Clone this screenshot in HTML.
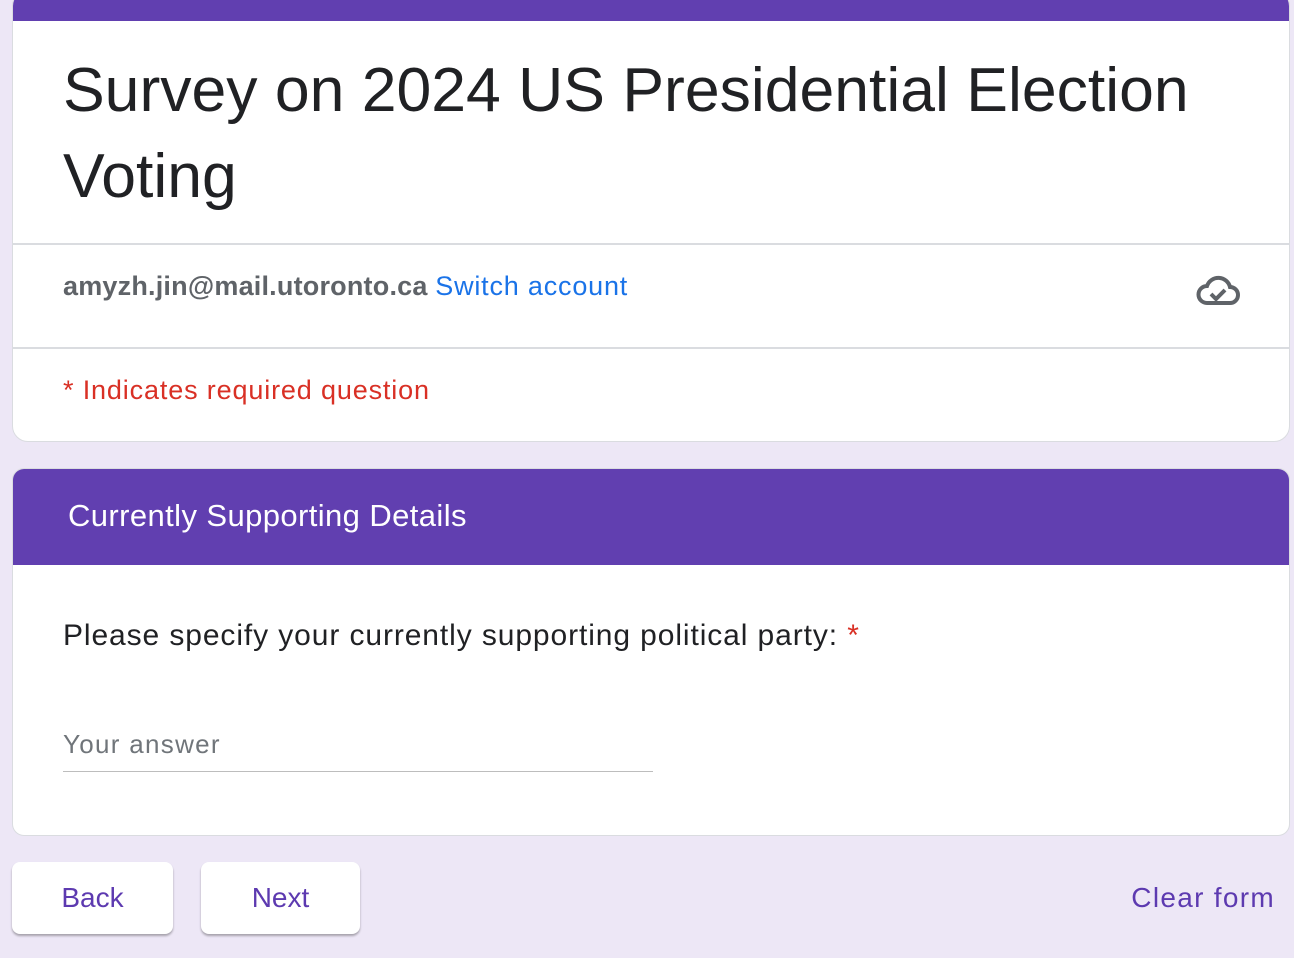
<!DOCTYPE html>
<html><head><style>
body{margin:0;width:1294px;height:958px;background:#ede7f6;font-family:"Liberation Sans",Arial,sans-serif;position:relative;overflow:hidden}
.card{position:absolute;left:12px;width:1278px;background:#fff;border:1px solid #dadce0;box-sizing:border-box}
.c1{top:-10px;height:452px;border-radius:16px;overflow:hidden}
.bar{position:absolute;left:0;top:0;width:100%;height:30px;background:#613fb0}
.t{position:absolute;left:50px;top:56px;font-size:62.5px;line-height:86px;color:#202124;width:1200px}
.hr{position:absolute;left:0;width:100%;border-top:2px solid #dadce0}
.c2{top:468px;height:368px;border-radius:12px;overflow:hidden}
.hd{position:absolute;left:0;top:0;width:100%;height:96px;background:#613fb0;color:#fff;font-size:31px;letter-spacing:0.4px}
.btn{position:absolute;top:862px;height:72px;background:#fff;border-radius:8px;box-shadow:0 2px 2px rgba(0,0,0,.3);color:#5d3ab0;font-size:28px;text-align:center;line-height:72px}
</style></head><body>
<div class="card c1">
<div class="bar"></div>
<div class="t">Survey on 2024 US Presidential Election Voting</div>
<div class="hr" style="top:252px"></div>
<div style="position:absolute;left:50px;top:280px;font-size:27px;color:#5f6368;font-weight:bold;letter-spacing:0.2px">amyzh.jin@mail.utoronto.ca <span style="color:#1a73e8;font-weight:normal;letter-spacing:0.8px">Switch account</span></div>
<svg style="position:absolute;left:1182px;top:280px" width="46" height="40" viewBox="0 0 46 40"><path d="M12 32 H35 A8 8 0 0 0 35 16 A12 12 0 0 0 12 15 A8.5 8.5 0 0 0 12 32 Z" fill="none" stroke="#5f6368" stroke-width="4"/><path d="M16 23 L21 28 L30 19" fill="none" stroke="#5f6368" stroke-width="4"/></svg>
<div class="hr" style="top:356px"></div>
<div style="position:absolute;left:50px;top:384px;font-size:27px;color:#d93025;letter-spacing:0.85px">* Indicates required question</div>
</div>
<div class="card c2">
<div class="hd"><div style="position:absolute;left:55px;top:29px">Currently Supporting Details</div></div>
<div style="position:absolute;left:50px;top:150px;font-size:30px;color:#202124;letter-spacing:0.9px">Please specify your currently supporting political party: <span style="color:#d93025">*</span></div>
<div style="position:absolute;left:50px;top:260px;font-size:26px;color:#70757a;letter-spacing:1.3px">Your answer</div>
<div style="position:absolute;left:50px;top:302px;width:590px;border-top:1px solid #bdbdbd"></div>
</div>
<div class="btn" style="left:12px;width:161px">Back</div>
<div class="btn" style="left:201px;width:159px">Next</div>
<div style="position:absolute;right:19px;top:882px;font-size:28px;color:#5d3ab0;letter-spacing:1.3px">Clear form</div>
</body></html>
